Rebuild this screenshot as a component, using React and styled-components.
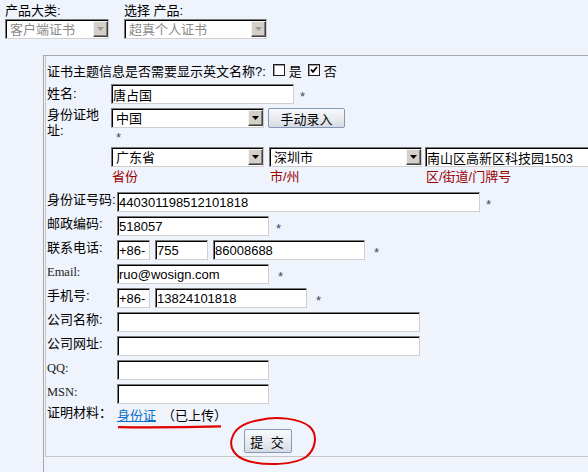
import React from "react";
import styled, { createGlobalStyle } from "styled-components";

const GlobalStyle = createGlobalStyle`
  html, body {
    margin: 0;
    padding: 0;
    background: #eef3fc;
    overflow: hidden;
  }
  body {
    font-family: "Liberation Sans", "Noto Sans CJK SC", sans-serif;
    font-size: 13px;
    color: #000;
  }
`;

const Page = styled.div`
  width: 588px;
  height: 472px;
  box-sizing: border-box;
  padding: 3px 0 0 5px;
  overflow: hidden;
`;

const TopBar = styled.div`
  display: flex;
  gap: 15px;
`;

const TopField = styled.div`
  display: flex;
  flex-direction: column;
`;

const TopLabel = styled.div`
  height: 16px;
  line-height: 16px;
  white-space: pre;
`;

const Panel = styled.div`
  margin: 16px 0 0 38px;
  width: 580px;
  border: 1px solid #a8a8a8;
  border-right: none;
  padding-bottom: 15px;
`;

const Inner = styled.div`
  margin-left: 1px;
  border-left: 1px solid #c6c6c6;
  border-bottom: 1px solid #c6c6c6;
  padding: 2px 0 3px 1px;
`;

const QuestionRow = styled.div`
  display: flex;
  align-items: center;
  height: 24px;
  white-space: nowrap;
`;

const CheckBox = styled.span`
  display: inline-flex;
  align-items: center;
  justify-content: center;
  box-sizing: border-box;
  width: 12px;
  height: 12px;
  margin: 0 4px 0 ${(p) => p.$gap}px;
  background: #fff;
  border: 1px solid #1e1e1e;
  box-shadow: inset 1px 1px 0 #9a9a9a;
`;

const FormRow = styled.div`
  display: flex;
  align-items: ${(p) => (p.$top ? "flex-start" : "center")};
  margin-top: ${(p) => p.$mt ?? 4}px;
  min-height: 20px;
  position: relative;
`;

const Label = styled.div`
  width: ${(p) => p.$w}px;
  flex-shrink: 0;
  line-height: 16px;
  white-space: ${(p) => (p.$wrap ? "normal" : "nowrap")};
  font-family: ${(p) =>
    p.$serif ? '"Liberation Serif", "Noto Sans CJK SC", serif' : "inherit"};
  font-size: ${(p) => (p.$serif ? "12.5px" : "13px")};
  color: ${(p) => (p.$serif ? "#222" : "#000")};
`;

const Fields = styled.div`
  display: flex;
  align-items: center;
  gap: ${(p) => p.$gap ?? 5}px;
  margin-top: ${(p) => p.$mt ?? 0}px;
`;

const AddressCol = styled.div`
  display: flex;
  flex-direction: column;
  padding-top: 1px;
`;

const StarLine = styled.div`
  height: 13px;
  padding: 3px 0 0 5px;
  line-height: 13px;
`;

const Star = styled.span`
  align-self: flex-start;
  margin: 6px 0 0 ${(p) => p.$ml ?? 0}px;
  line-height: 13px;
  font-size: 13px;
  color: #3b4a6b;
`;

const LineStar = styled(Star)`
  margin: 0;
`;

const RedLabels = styled.div`
  display: flex;
  height: 20px;
  line-height: 20px;
  color: #9a0000;
  white-space: nowrap;
`;

const RedLabel = styled.span`
  width: ${(p) => p.$w}px;
  padding-left: ${(p) => p.$pl ?? 0}px;
  flex-shrink: 0;
`;

const TextInput = styled.input`
  box-sizing: border-box;
  width: ${(p) => p.$w}px;
  height: 20px;
  margin: 0 0 0 ${(p) => p.$ml ?? 0}px;
  padding: 0 1px;
  background: #fff;
  border: 1px solid;
  border-color: #7b7b7b #cfcfcf #cfcfcf #7b7b7b;
  box-shadow: inset 1px 1px 0 #000;
  font: 13px "Liberation Sans", "Noto Sans CJK SC", sans-serif;
  color: #000;
  outline: none;
`;

const SelectBox = styled.div`
  display: flex;
  box-sizing: border-box;
  width: ${(p) => p.$w}px;
  height: 20px;
  padding: 1px 0 0 1px;
  background: #fff;
  border: 1px solid;
  border-color: #7b7b7b #cfcfcf #cfcfcf #7b7b7b;
  box-shadow: inset 1px 1px 0 #000;
`;

const SelectText = styled.span`
  flex: 1;
  padding-left: 3px;
  line-height: 17px;
  white-space: nowrap;
  overflow: hidden;
  color: ${(p) => (p.$disabled ? "#8a8a8a" : "#000")};
`;

const DropButton = styled.span`
  display: flex;
  align-items: center;
  justify-content: center;
  box-sizing: border-box;
  width: 15px;
  height: 16px;
  background: #d4d0c8;
  border: 1px solid;
  border-color: #f4f4f4 #404040 #404040 #f4f4f4;
  box-shadow: inset -1px -1px 0 #808080;
`;

const PushButton = styled.button`
  box-sizing: border-box;
  width: ${(p) => p.$w}px;
  height: ${(p) => p.$h}px;
  margin: 0;
  padding: 0;
  border: 1px solid #8399b6;
  border-radius: 2px;
  background: linear-gradient(#f8f9fb, #e6e9ef 60%, #d6dbe4);
  font: 13px "Liberation Sans", "Noto Sans CJK SC", sans-serif;
  letter-spacing: ${(p) => p.$ls ?? 0}px;
  color: #000;
`;

const Link = styled.a`
  color: #0b6fc4;
  text-decoration: underline;
`;

const Uploaded = styled.span`
  margin-left: 6px;
`;

const Annotation = styled.svg`
  position: absolute;
  left: ${(p) => p.$x}px;
  top: ${(p) => p.$y}px;
  overflow: visible;
  pointer-events: none;
`;

const ButtonRow = styled.div`
  display: flex;
  margin-top: 4px;
  padding-left: 197px;
`;

const ButtonWrap = styled.div`
  position: relative;
`;

const Select = ({ w, value, disabled }) => (
  <SelectBox $w={w}>
    <SelectText $disabled={disabled}>{value}</SelectText>
    <DropButton>
      <svg width="7" height="4" viewBox="0 0 7 4">
        <path d="M0 0h7L3.5 4z" fill={disabled ? "#9a9a9a" : "#000"} />
      </svg>
    </DropButton>
  </SelectBox>
);

const Check = ({ checked, gap }) => (
  <CheckBox $gap={gap}>
    {checked && (
      <svg width="8" height="8" viewBox="0 0 8 8">
        <path d="M1 3.5L3 5.8L7 1" fill="none" stroke="#000" strokeWidth="1.8" />
      </svg>
    )}
  </CheckBox>
);

export default function App() {
  return (
    <Page>
      <GlobalStyle />
      <TopBar>
        <TopField>
          <TopLabel>产品大类:</TopLabel>
          <Select w={104} value="客户端证书" disabled />
        </TopField>
        <TopField>
          <TopLabel>选择 产品:</TopLabel>
          <Select w={143} value="超真个人证书" disabled />
        </TopField>
      </TopBar>

      <Panel>
        <Inner>
          <QuestionRow>
            证书主题信息是否需要显示英文名称?:
            <Check gap={7} />
            是
            <Check gap={6} checked />
            否
          </QuestionRow>

          <FormRow $mt={2}>
            <Label $w={64}>姓名:</Label>
            <TextInput $w={183} defaultValue="唐占国" />
            <Star $ml={6}>*</Star>
          </FormRow>

          <FormRow $top $mt={3}>
            <Label $w={64} $wrap>身份证地址:</Label>
            <AddressCol>
              <Fields $gap={4}>
                <Select w={153} value="中国" />
                <PushButton $w={77} $h={20}>手动录入</PushButton>
              </Fields>
              <StarLine>
                <LineStar>*</LineStar>
              </StarLine>
              <Fields $gap={5} $mt={3}>
                <Select w={153} value="广东省" />
                <Select w={153} value="深圳市" />
                <TextInput $w={175} $ml={-2} defaultValue="南山区高新区科技园1503" />
              </Fields>
              <RedLabels>
                <RedLabel $w={158} $pl={1}>省份</RedLabel>
                <RedLabel $w={156}>市/州</RedLabel>
                <RedLabel $w={160}>区/街道/门牌号</RedLabel>
              </RedLabels>
            </AddressCol>
          </FormRow>

          <FormRow $top $mt={5}>
            <Label $w={70}>身份证号码:</Label>
            <TextInput $w={363} defaultValue="440301198512101818" />
            <Star $ml={6}>*</Star>
          </FormRow>
          <FormRow $top>
            <Label $w={70}>邮政编码:</Label>
            <TextInput $w={152} defaultValue="518057" />
            <Star $ml={7}>*</Star>
          </FormRow>
          <FormRow $top>
            <Label $w={70}>联系电话:</Label>
            <Fields>
              <TextInput $w={33} defaultValue="+86-" />
              <TextInput $w={53} defaultValue="755" />
              <TextInput $w={152} defaultValue="86008688" />
            </Fields>
            <Star $ml={9}>*</Star>
          </FormRow>
          <FormRow $top>
            <Label $w={70} $serif>Email:</Label>
            <TextInput $w={152} defaultValue="ruo@wosign.com" />
            <Star $ml={9}>*</Star>
          </FormRow>
          <FormRow $top>
            <Label $w={70}>手机号:</Label>
            <Fields>
              <TextInput $w={33} defaultValue="+86-" />
              <TextInput $w={152} defaultValue="13824101818" />
            </Fields>
            <Star $ml={9}>*</Star>
          </FormRow>
          <FormRow $top>
            <Label $w={70}>公司名称:</Label>
            <TextInput $w={303} defaultValue="" />
          </FormRow>
          <FormRow $top>
            <Label $w={70}>公司网址:</Label>
            <TextInput $w={303} defaultValue="" />
          </FormRow>
          <FormRow $top>
            <Label $w={70} $serif>QQ:</Label>
            <TextInput $w={152} defaultValue="" />
          </FormRow>
          <FormRow $top>
            <Label $w={70} $serif>MSN:</Label>
            <TextInput $w={152} defaultValue="" />
          </FormRow>

          <FormRow $top $mt={1}>
            <Label $w={70}>证明材料：</Label>
            <Link>身份证</Link>
            <Uploaded>（已上传）</Uploaded>
            <Annotation $x={70} $y={20} width="106" height="4" viewBox="0 0 106 4">
              <path d="M1 2.2Q50 2.8 104 1.4" fill="none" stroke="#e00000" strokeWidth="2.2" />
            </Annotation>
          </FormRow>

          <ButtonRow>
            <ButtonWrap>
              <PushButton $w={48} $h={24} $ls={2}>提&nbsp;交</PushButton>
              <Annotation $x={-14} $y={-12} width="86" height="49" viewBox="0 0 86 49">
                <path
                  d="M30 3C45 -1 70 1 80 10C88 18 86 32 76 40C64 48 36 49 18 44C4 40 -1 30 2 21C5 11 16 5 30 3Z"
                  fill="none"
                  stroke="#e00000"
                  strokeWidth="2"
                />
              </Annotation>
            </ButtonWrap>
          </ButtonRow>
        </Inner>
      </Panel>
    </Page>
  );
}
